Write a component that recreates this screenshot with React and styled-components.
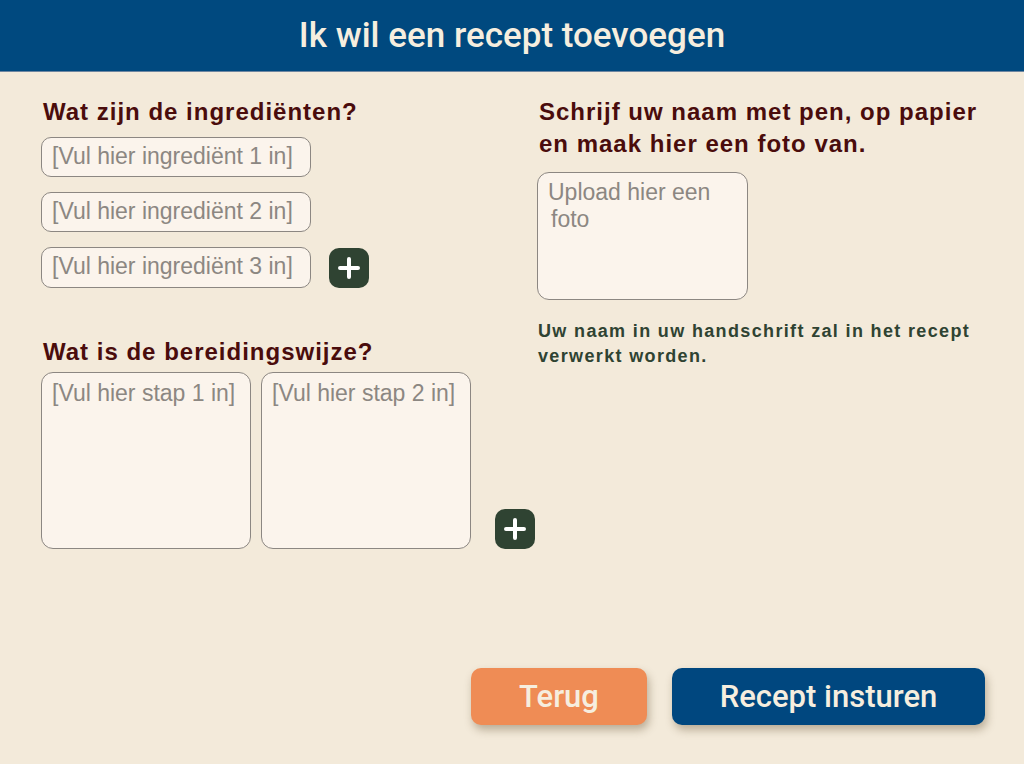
import React from 'react';
import styled, { createGlobalStyle } from 'styled-components';

const GlobalStyle = createGlobalStyle`
    body {
        margin: 0;
        background: #f3eada;
        font-family: "Liberation Sans", Arial, sans-serif;
    }
`;

const Page = styled.div`
    min-height: 764px;
    display: flex;
    flex-direction: column;
    box-sizing: border-box;
`;

const Header = styled.header`
    height: 71px;
    background: #00497f;
    display: flex;
    align-items: center;
    justify-content: center;
    border-bottom: 1px solid #6d86a0;
`;

const Title = styled.h1`
    margin: 0;
    color: #f6eedf;
    font-family: Roboto, "Liberation Sans", sans-serif;
    font-weight: 500;
    font-size: 35px;
`;

const Content = styled.main`
    display: grid;
    grid-template-columns: 496px 1fr;
    padding: 24px 40px 0 41px;
`;

const Column = styled.section`
    display: flex;
    flex-direction: column;
`;

const Heading = styled.h2`
    margin: ${p => p.$top || 0}px 0 ${p => p.$gap || 8}px 2px;
    color: #4a0c0c;
    font-weight: bold;
    font-size: 24px;
    letter-spacing: 1px;
    line-height: 32px;
`;

const Rows = styled.div`
    display: flex;
    flex-direction: column;
    gap: 15px;
`;

const Row = styled.div`
    display: flex;
    align-items: ${p => p.$align || 'center'};
    gap: ${p => p.$gap || 18}px;
`;

const Field = styled.div`
    box-sizing: border-box;
    width: ${p => p.$w}px;
    height: ${p => p.$h}px;
    background: #fbf4ec;
    border: 1px solid #8c8782;
    border-radius: ${p => p.$r || 10}px;
    color: #8c8782;
    font-size: 23px;
    line-height: 27px;
    padding: ${p => p.$pad || '5px 10px'};
    white-space: nowrap;
`;

const Indent = styled.span`
    margin-left: 3px;
`;

const Steps = styled.div`
    display: flex;
    gap: 10px;
`;

const PlusButton = styled.button`
    width: 40px;
    height: 40px;
    border: none;
    border-radius: 10px;
    background: #2f4332;
    display: flex;
    align-items: center;
    justify-content: center;
    padding: 0;
`;

const Note = styled.p`
    margin: 19px 0 0 1px;
    color: #2f4332;
    font-weight: bold;
    font-size: 18px;
    letter-spacing: 1.35px;
    line-height: 25px;
`;

const Footer = styled.footer`
    margin-top: auto;
    display: flex;
    justify-content: flex-end;
    gap: 25px;
    padding: 0 39px 39px 0;
`;

const ActionButton = styled.button`
    width: ${p => p.$w}px;
    height: 57px;
    border: none;
    border-radius: 10px;
    background: ${p => p.$bg};
    color: #f6eedf;
    font-family: Roboto, "Liberation Sans", sans-serif;
    font-weight: 500;
    font-size: 31px;
    box-shadow: 2px 5px 8px rgba(80, 60, 30, 0.35);
`;

function Plus() {
    return (
        <svg width="24" height="24" viewBox="0 0 24 24">
            <path d="M12 3v18M3 12h18" stroke="#fff" strokeWidth="4" strokeLinecap="round" />
        </svg>
    );
}

export default function App() {
    return (
        <Page>
            <GlobalStyle />
            <Header>
                <Title>Ik wil een recept toevoegen</Title>
            </Header>
            <Content>
                <Column>
                    <Heading $gap={9}>Wat zijn de ingrediënten?</Heading>
                    <Rows>
                        <Row><Field $w={270} $h={40}>[Vul hier ingrediënt 1 in]</Field></Row>
                        <Row><Field $w={270} $h={40}>[Vul hier ingrediënt 2 in]</Field></Row>
                        <Row>
                            <Field $w={270} $h={41}>[Vul hier ingrediënt 3 in]</Field>
                            <PlusButton><Plus /></PlusButton>
                        </Row>
                    </Rows>
                    <Heading $top={48} $gap={4}>Wat is de bereidingswijze?</Heading>
                    <Row $align="flex-end" $gap={24}>
                        <Steps>
                            <Field $w={210} $h={177} $r={12} $pad="7px 10px">[Vul hier stap 1 in]</Field>
                            <Field $w={210} $h={177} $r={12} $pad="7px 10px">[Vul hier stap 2 in]</Field>
                        </Steps>
                        <PlusButton><Plus /></PlusButton>
                    </Row>
                </Column>
                <Column>
                    <Heading $gap={12}>Schrijf uw naam met pen, op papier en maak hier een foto van.</Heading>
                    <Field $w={211} $h={128} $r={12} $pad="6px 10px">
                        Upload hier een<br /><Indent>foto</Indent>
                    </Field>
                    <Note>Uw naam in uw handschrift zal in het recept verwerkt worden.</Note>
                </Column>
            </Content>
            <Footer>
                <ActionButton $w={176} $bg="#ef8c55">Terug</ActionButton>
                <ActionButton $w={313} $bg="#00477f">Recept insturen</ActionButton>
            </Footer>
        </Page>
    );
}
